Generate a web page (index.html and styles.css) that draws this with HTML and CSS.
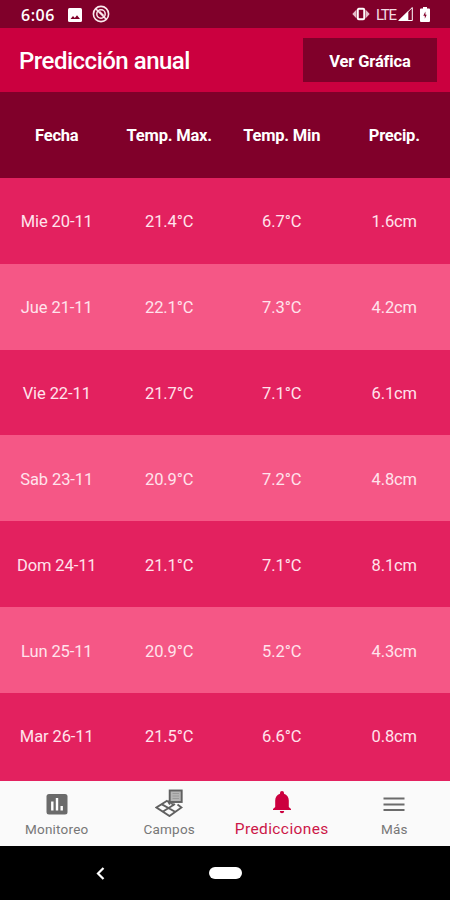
FILE: index.html
```html
<!DOCTYPE html>
<html lang="es">
<head>
    <meta charset="UTF-8">
    <meta name="viewport" content="width=device-width, initial-scale=1.0">
    <title>Predicción anual</title>
    <link rel="stylesheet" href="styles.css">
</head>
<body>
    <div class="status-bar">
        <span class="clock">6:06</span>
        <svg class="picture-icon" width="14" height="14" viewBox="0 0 14 14">
            <rect width="14" height="14" rx="1.5" fill="#fff"/>
            <path d="M2.5 11L5 8l1.8 2L9 7.2l3 3.8z" fill="#80002a"/>
        </svg>
        <svg class="sync-icon" width="18" height="18" viewBox="0 0 18 18" fill="none" stroke="#fbe9ee">
            <circle cx="9" cy="9" r="7.6" stroke-width="1.6"/>
            <circle cx="9" cy="9" r="4.2" stroke-width="1.5"/>
            <path d="M4 4l10 10M7.5 6.5l4 4" stroke-width="1.6"/>
        </svg>
        <svg class="vibrate-icon" width="18" height="14" viewBox="0 0 18 14">
            <rect x="5.8" y="1.8" width="6.4" height="10.4" rx="1" fill="none" stroke="#fff" stroke-width="1.9"/>
            <path d="M4.500 2.500v9L0.300 7zM13.500 2.500v9l4.200-4.500z" fill="#e5bdca"/>
        </svg>
        <span class="network">LTE</span>
        <svg class="signal-icon" width="15" height="14" viewBox="0 0 15 14">
            <path d="M14.3 0.5v13H1z" fill="none" stroke="#fff"/>
            <path d="M10.3 4v10H0z" fill="#fff"/>
        </svg>
        <svg class="battery-icon" width="10" height="15" viewBox="0 0 10 15">
            <path d="M3 0h4v1.5h2a1 1 0 0 1 1 1V14a1 1 0 0 1-1 1H1a1 1 0 0 1-1-1V2.500a1 1 0 0 1 1-1h2z" fill="#fff"/>
            <path d="M5.400 4.500L3.300 8.800h1.500v3L6.700 7.700H5.400z" fill="#80002a"/>
        </svg>
    </div>

    <div class="header">
        <h1 class="title">Predicción anual</h1>
        <button class="graph-button">Ver Gráfica</button>
    </div>

    <div class="table">
        <div class="row row-head">
            <span>Fecha</span><span>Temp. Max.</span><span>Temp. Min</span><span>Precip.</span>
        </div>
        <div class="row">
            <span>Mie 20-11</span><span>21.4°C</span><span>6.7°C</span><span>1.6cm</span>
        </div>
        <div class="row row-light">
            <span>Jue 21-11</span><span>22.1°C</span><span>7.3°C</span><span>4.2cm</span>
        </div>
        <div class="row">
            <span>Vie 22-11</span><span>21.7°C</span><span>7.1°C</span><span>6.1cm</span>
        </div>
        <div class="row row-light">
            <span>Sab 23-11</span><span>20.9°C</span><span>7.2°C</span><span>4.8cm</span>
        </div>
        <div class="row">
            <span>Dom 24-11</span><span>21.1°C</span><span>7.1°C</span><span>8.1cm</span>
        </div>
        <div class="row row-light">
            <span>Lun 25-11</span><span>20.9°C</span><span>5.2°C</span><span>4.3cm</span>
        </div>
        <div class="row">
            <span>Mar 26-11</span><span>21.5°C</span><span>6.6°C</span><span>0.8cm</span>
        </div>
    </div>

    <div class="tabs">
        <div class="tab">
            <svg width="28" height="28" viewBox="0 0 28 28">
                <rect x="3.500" y="5" width="21" height="20.500" rx="2.500" fill="#6b6b6b"/>
                <path d="M9.300 12.500v9M14 9v12.500M18.700 17v4.500" stroke="#fff" stroke-width="2.400"/>
            </svg>
            <span>Monitoreo</span>
        </div>
        <div class="tab">
            <svg width="28" height="28" viewBox="0 0 28 28" fill="none" stroke="#606060" stroke-width="1.900">
                <path d="M12.500 11.500L1.500 18.500L14.500 27L26.500 18.500L22.500 15.500M6.500 15.200L20.500 23M8 22.500L20 15M12.500 11.500L15 15.500"/>
                <rect x="14.700" y="1.500" width="12" height="11.500" fill="#b5b5b5"/>
                <path d="M17.500 4.500h6.500M17.500 7h6.500M17.500 9.500h6.500" stroke="#9a9a9a" stroke-width="1"/>
                <path d="M14.500 13l3.500 3v-3.500" stroke-width="1.200"/>
            </svg>
            <span>Campos</span>
        </div>
        <div class="tab tab-active">
            <svg width="28" height="28" viewBox="0 0 28 28" fill="#cc003f">
                <path d="M14 2a2 2 0 0 1 2 2v0.700c3 1 4.800 3.500 4.800 6.800v6.500l2.200 2v1H5v-1l2.200-2v-6.500c0-3.300 1.800-5.800 4.800-6.800V4a2 2 0 0 1 2-2z"/>
                <path d="M11.800 22h4.400a2.200 2.200 0 0 1-4.400 0z"/>
            </svg>
            <span>Predicciones</span>
        </div>
        <div class="tab">
            <svg width="28" height="28" viewBox="0 0 28 28" stroke="#6b6b6b" stroke-width="2">
                <path d="M3.500 9.500h21M3.500 15.500h21M3.500 21h21"/>
            </svg>
            <span>Más</span>
        </div>
    </div>

    <div class="system-nav">
        <svg class="back-icon" width="9" height="13" viewBox="0 0 9 13">
            <path d="M7.500 1L2 6.500L7.500 12" fill="none" stroke="#fff" stroke-width="2.200"/>
        </svg>
        <div class="home-pill"></div>
    </div>
</body>
</html>
```
FILE: styles.css
```css
body{
    margin: 0;
    width: 450px;
    height: 900px;
    display: flex;
    flex-direction: column;
    overflow: hidden;
    background-color: #000;
    color: white;
    font-family: Roboto, "Liberation Sans", sans-serif;
}
.status-bar{
    height: 28px;
    flex: none;
    display: flex;
    align-items: center;
    background-color: #80002a;
}
.clock{
    width: 35px;
    margin-left: 21px;
    margin-top: 1px;
    font-family: "Open Sans", Roboto, sans-serif;
    font-size: 16px;
    font-weight: 600;
    letter-spacing: 0.5px;
}
.picture-icon{
    margin-left: 12px;
    margin-top: 1px;
}
.sync-icon{
    margin-left: 10px;
}
.vibrate-icon{
    margin-left: auto;
}
.network{
    width: 21px;
    margin-left: 6px;
    margin-top: 1px;
    font-size: 15px;
    letter-spacing: -1.3px;
    color: #f3dbe3;
}
.signal-icon{
    margin-left: 1px;
}
.battery-icon{
    margin-left: 7px;
    margin-right: 20px;
}
.header{
    height: 64px;
    flex: none;
    display: flex;
    justify-content: space-between;
    align-items: center;
    padding-left: 19px;
    padding-right: 13px;
    background-color: #cb003f;
}
.title{
    margin: 2px 0 0;
    font-size: 24px;
    font-weight: 500;
    letter-spacing: -0.5px;
}
.graph-button{
    width: 134px;
    height: 44px;
    padding: 2px 0 0;
    border: none;
    background-color: #80002a;
    color: white;
    font-family: inherit;
    font-size: 16.5px;
    font-weight: 700;
    letter-spacing: -0.15px;
}
.table{
    height: 689px;
    flex: none;
    background-color: #e3215f;
}
.row{
    height: 85.86px;
    display: grid;
    grid-template-columns: repeat(4, 1fr);
    align-items: center;
    text-align: center;
    font-size: 16.5px;
    letter-spacing: -0.1px;
    color: #ffe3ec;
    background-color: #e3215f;
}
.row span{
    padding-top: 2px;
    padding-left: 1px;
}
.row-light{
    background-color: #f55786;
}
.row-head{
    background-color: #80002a;
    color: white;
    font-weight: 700;
    letter-spacing: -0.2px;
}
.tabs{
    height: 65px;
    flex: none;
    display: grid;
    grid-template-columns: repeat(4, 1fr);
    background-color: #fafafa;
}
.tab{
    display: flex;
    flex-direction: column;
    align-items: center;
    padding-top: 8px;
    padding-left: 1px;
    font-size: 13.5px;
    line-height: 24px;
    letter-spacing: 0.2px;
    color: #777;
}
.tab svg{
    flex: none;
}
.tab-active{
    font-size: 15.5px;
    letter-spacing: 0.4px;
    color: #cc1748;
}
.system-nav{
    flex: 1;
    display: flex;
    align-items: center;
    background-color: #000;
}
.back-icon{
    margin-left: 96px;
}
.home-pill{
    width: 33px;
    height: 12px;
    margin-left: 104px;
    border-radius: 6px;
    background-color: white;
}
```
